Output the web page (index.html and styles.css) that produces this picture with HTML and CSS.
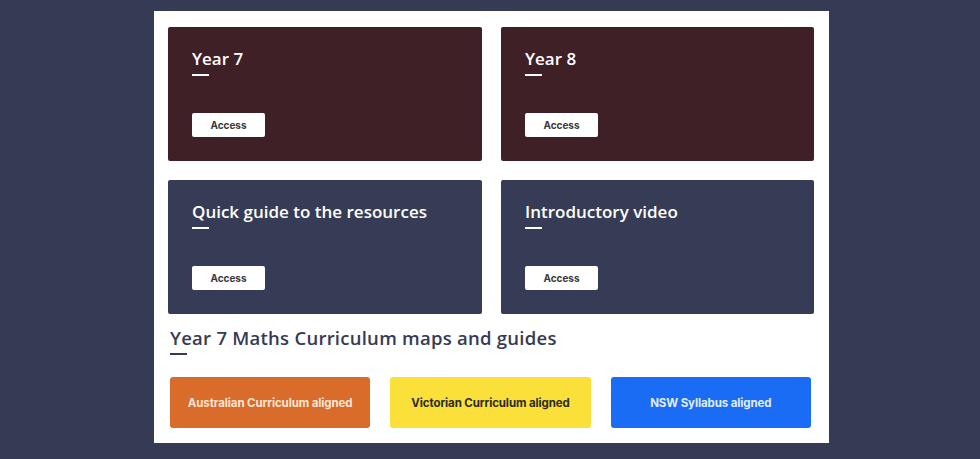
FILE: index.html
```html
<!DOCTYPE html>
<html lang="en">
<head>
  <meta charset="UTF-8" />
  <meta name="viewport" content="width=device-width, initial-scale=1.0"/>
  <title>Year 7 Maths</title>
  <link rel="stylesheet" href="styles.css">
</head>
<body>

  <main class="panel">
    <div class="tiles">
      <div class="tile tile-year">
        <h2>Year 7</h2>
        <a class="access" href="#">Access</a>
      </div>
      <div class="tile tile-year">
        <h2>Year 8</h2>
        <a class="access" href="#">Access</a>
      </div>
      <div class="tile tile-info">
        <h2>Quick guide to the resources</h2>
        <a class="access" href="#">Access</a>
      </div>
      <div class="tile tile-info">
        <h2>Introductory video</h2>
        <a class="access" href="#">Access</a>
      </div>
    </div>

    <section class="maps">
      <h3>Year 7 Maths Curriculum maps and guides</h3>
      <div class="map-links">
        <a class="map-btn australian" href="#">Australian Curriculum aligned</a>
        <a class="map-btn victorian" href="#">Victorian Curriculum aligned</a>
        <a class="map-btn nsw" href="#">NSW Syllabus aligned</a>
      </div>
    </section>
  </main>

</body>
</html>
```

FILE: styles.css
```css
body {
  margin: 0;
  background-color: #353b55;
  font-family: 'Open Sans', sans-serif;
  padding-top: 11px;
}

.panel {
  width: 675px;
  margin-left: 154px;
  background-color: #fff;
  box-sizing: border-box;
  padding: 16px 15px 15px 14px;
}

.tiles {
  display: grid;
  grid-template-columns: 314px 313px;
  column-gap: 19px;
  row-gap: 19px;
}

.tile {
  height: 134px;
  box-sizing: border-box;
  padding: 18px 24px 0;
  border-radius: 2px;
  color: #fff;
}

.tile-year {
  background-color: #3f2027;
}

.tile-info {
  background-color: #363c55;
}

.tile h2 {
  margin: 0;
  font-size: 17px;
  font-weight: 600;
  line-height: 28px;
}

.tile h2::after,
.maps h3::after {
  content: "";
  display: block;
  width: 17px;
  height: 2px;
  background-color: #fff;
  margin-top: 1px;
}

.access {
  display: block;
  width: 73px;
  height: 24px;
  margin-top: 37px;
  background-color: #fff;
  border-radius: 2px;
  color: #3a3a3a;
  font-family: 'Inter', sans-serif;
  font-size: 10px;
  font-weight: 700;
  line-height: 25px;
  text-align: center;
  text-decoration: none;
}

.maps {
  padding: 0 3px 0 2px;
}

.maps h3 {
  margin: 12px 0 0;
  font-size: 18.5px;
  font-weight: 600;
  line-height: 24px;
  color: #353b55;
  letter-spacing: 0.25px;
}

.maps h3::after {
  background-color: #353b55;
  margin-top: 3px;
}

.map-links {
  display: grid;
  grid-template-columns: repeat(3, 1fr);
  column-gap: 20px;
  margin-top: 22px;
}

.map-btn {
  height: 51px;
  border-radius: 3px;
  display: flex;
  align-items: center;
  justify-content: center;
  font-family: 'Inter', sans-serif;
  font-size: 11.5px;
  font-weight: 700;
  letter-spacing: -0.1px;
  text-decoration: none;
}

.australian {
  background-color: #d96b2b;
  color: #fbe7d6;
}

.victorian {
  background-color: #fae039;
  color: #2b2a24;
}

.nsw {
  background-color: #1a6cf5;
  color: #e3ecfd;
}
```
